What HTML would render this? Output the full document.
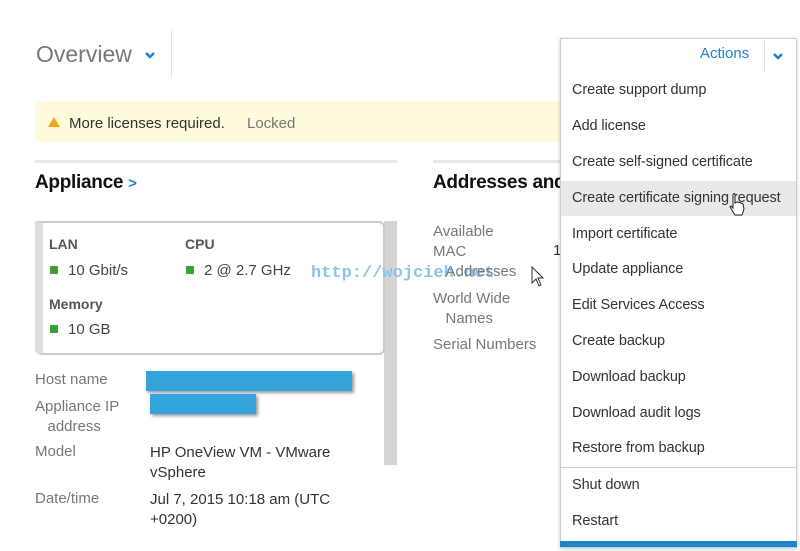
<!DOCTYPE html>
<html><head><style>
*{margin:0;padding:0;box-sizing:border-box}
body{width:800px;height:551px;background:#fff;position:relative;overflow:hidden;font-family:"Liberation Sans",sans-serif;}
.a{position:absolute;white-space:nowrap}
.n{font-family:"Liberation Sans",sans-serif}
.lbl{color:#777;font-size:15px}
.val{color:#333;font-size:15px}
.mi{position:absolute;left:572px;font-size:14.5px;color:#333;letter-spacing:-0.1px}
.sq{display:inline-block;width:8px;height:8px;background:#3aa02f;margin-right:10px;vertical-align:1px}
</style></head><body>
<div class="a" style="left:36px;top:41px;font-size:23px;color:#777">Overview</div>
<svg class="a" style="left:144px;top:51px" width="12" height="9"><path d="M2 2 L6 6 L10 2" stroke="#1a85c8" stroke-width="2.5" fill="none"/></svg>
<div class="a" style="left:171px;top:30px;width:1px;height:48px;background:#e6e6e6"></div>

<div class="a" style="left:35px;top:101px;width:530px;height:41px;background:#fdfbdc;border-radius:4px"></div>
<svg class="a" style="left:47px;top:116px" width="14" height="12"><path d="M7 1 L13 11 L1 11Z" fill="#f2a81d"/></svg>
<div class="a" style="left:69px;top:115px;font-size:15px;color:#333">More licenses required.</div>
<div class="a" style="left:247px;top:115px;font-size:15px;color:#777">Locked</div>

<div class="a" style="left:35px;top:160px;width:362px;height:3px;background:#e8e8e8"></div>
<div class="a" style="left:433px;top:160px;width:130px;height:3px;background:#e8e8e8"></div>
<div class="a" style="left:35px;top:172px;font-size:19px;font-weight:bold;color:#111;letter-spacing:-0.3px">Appliance <span style="color:#1a85c8;font-size:15px">&gt;</span></div>
<div class="a" style="left:433px;top:172px;font-size:19px;font-weight:bold;color:#111;letter-spacing:-0.3px">Addresses and</div>

<div class="a" style="left:384px;top:221px;width:13px;height:244px;background:#d4d4d4"></div>
<div class="a" style="left:35px;top:221px;width:350px;height:134px;border:2px solid #ccc;border-left:8px solid #ddd;border-radius:0 6px 6px 6px;background:#fff"></div>
<div class="a n" style="left:49px;top:236px;font-size:14px;font-weight:bold;color:#555">LAN</div>
<div class="a n" style="left:185px;top:236px;font-size:14px;font-weight:bold;color:#555">CPU</div>
<div class="a val" style="left:50px;top:262px;color:#444"><span class="sq"></span>10 Gbit/s</div>
<div class="a val" style="left:186px;top:262px;color:#444"><span class="sq"></span>2 @ 2.7 GHz</div>
<div class="a n" style="left:49px;top:296px;font-size:14px;font-weight:bold;color:#555">Memory</div>
<div class="a val" style="left:50px;top:321px;color:#444"><span class="sq"></span>10 GB</div>
<div class="a" style="left:311px;top:264px;font-size:17px;color:#8cc4e8;font-family:'Liberation Mono',monospace;font-weight:bold">http://wojcieh.net</div>

<div class="a lbl" style="left:35px;top:371px">Host name</div>
<div class="a" style="left:146px;top:371px;width:206px;height:20px;background:#35a3dc;box-shadow:2px 2px 3px #999"></div>
<div class="a lbl" style="left:35px;top:397px;line-height:20px">Appliance IP<br>&nbsp;&nbsp;&nbsp;address</div>
<div class="a" style="left:150px;top:394px;width:106px;height:20px;background:#35a3dc;box-shadow:2px 2px 3px #999"></div>
<div class="a lbl" style="left:35px;top:443px">Model</div>
<div class="a val" style="left:150px;top:443px;line-height:20px">HP OneView VM - VMware<br>vSphere</div>
<div class="a lbl" style="left:35px;top:490px">Date/time</div>
<div class="a val" style="left:150px;top:490px;line-height:20px">Jul 7, 2015 10:18 am (UTC<br>+0200)</div>

<div class="a lbl" style="left:433px;top:222px;line-height:20px">Available<br>MAC<br>&nbsp;&nbsp;&nbsp;Addresses</div>
<div class="a val" style="left:553px;top:242px">1</div>
<div class="a lbl" style="left:433px;top:289px;line-height:20px">World Wide<br>&nbsp;&nbsp;&nbsp;Names</div>
<div class="a lbl" style="left:433px;top:336px">Serial Numbers</div>
<svg class="a" style="left:531px;top:266px" width="14" height="22"><path d="M1 1 L1 17 L5 13 L8 20 L10 19 L7 12 L12 12Z" fill="#fff" stroke="#333" stroke-width="1"/></svg>

<div class="a" style="left:560px;top:38px;width:237px;height:510px;background:#fff;border:1px solid #ccc;box-shadow:0 1px 4px rgba(0,0,0,.2)"></div>
<div class="a" style="left:700px;top:45px;font-size:15px;color:#1a85c8">Actions</div>
<div class="a" style="left:764px;top:41px;width:1px;height:30px;background:#ddd"></div>
<svg class="a" style="left:772px;top:52px" width="12" height="9"><path d="M2 2 L6 6 L10 2" stroke="#1a85c8" stroke-width="2.5" fill="none"/></svg>
<div class="a" style="left:561px;top:181px;width:235px;height:35px;background:#e9e9e9"></div>
<div class="mi" style="top:82px">Create support dump</div>
<div class="mi" style="top:118px">Add license</div>
<div class="mi" style="top:154px">Create self-signed certificate</div>
<div class="mi" style="top:190px">Create certificate signing request</div>
<div class="mi" style="top:226px">Import certificate</div>
<div class="mi" style="top:261px">Update appliance</div>
<div class="mi" style="top:297px">Edit Services Access</div>
<div class="mi" style="top:333px">Create backup</div>
<div class="mi" style="top:369px">Download backup</div>
<div class="mi" style="top:405px">Download audit logs</div>
<div class="mi" style="top:440px">Restore from backup</div>
<div class="a" style="left:561px;top:467px;width:235px;height:1px;background:#ccc"></div>
<div class="mi" style="top:477px">Shut down</div>
<div class="mi" style="top:513px">Restart</div>
<div class="a" style="left:560px;top:541px;width:237px;height:6px;background:#1a85c8"></div>
<svg class="a" style="left:728px;top:193px" width="18" height="24"><path d="M5 2 Q5 0 7 1 L7 10 L9 9 L11 9.5 L13 10 L15 11 L16 16 L14 22 L7 22 L2 14 L3 13 L5 15Z" fill="#fff" stroke="#222" stroke-width="1"/></svg>
</body></html>
